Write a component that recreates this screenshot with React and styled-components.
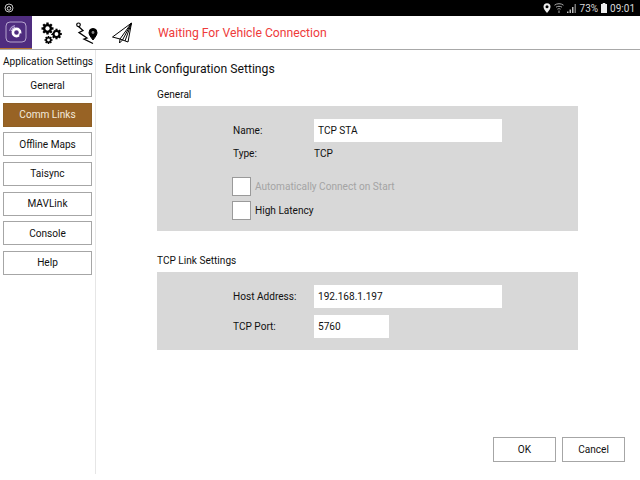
import React from 'react';
import styled, { createGlobalStyle } from 'styled-components';

const GlobalStyle = createGlobalStyle`
  html, body {
    margin: 0;
    padding: 0;
    background: #fff;
  }
  * {
    box-sizing: border-box;
  }
`;

const Page = styled.div`
  width: 640px;
  height: 480px;
  display: flex;
  flex-direction: column;
  overflow: hidden;
  font-family: Roboto, "Liberation Sans", sans-serif;
  color: #111;
`;

const StatusBar = styled.div`
  height: 16px;
  background: #000;
  color: #d8d8d8;
  display: flex;
  align-items: center;
  padding: 0 5px 0 4px;
  font-size: 10px;
  flex: none;
`;

const StatusRight = styled.div`
  margin-left: auto;
  display: flex;
  align-items: center;
  gap: 3px;
`;

const Toolbar = styled.div`
  height: 34px;
  flex: none;
  display: flex;
  align-items: stretch;
  border-bottom: 1px solid #a8a8a8;
`;

const LogoTile = styled.div`
  width: 32px;
  margin-right: 2px;
  background: #4f2d7f;
  border-bottom: 1px solid #b87333;
  display: flex;
  align-items: center;
  justify-content: center;
`;

const ToolIcon = styled.div`
  width: 35px;
  display: flex;
  align-items: center;
  justify-content: center;
`;

const ToolbarMessage = styled.div`
  margin-left: 19px;
  display: flex;
  align-items: center;
  color: #ee3b3b;
  font-size: 12.2px;
`;

const Body = styled.div`
  flex: 1;
  display: flex;
  min-height: 0;
`;

const Sidebar = styled.div`
  width: 96px;
  height: 424px;
  flex: none;
  border-right: 1px solid #e6e6e6;
  padding: 6px 3px 0;
  display: flex;
  flex-direction: column;
  gap: 5.67px;
`;

const SidebarTitle = styled.div`
  font-size: 10.1px;
  line-height: 12px;
  margin-bottom: -0.67px;
  white-space: nowrap;
`;

const SideButton = styled.div`
  height: 24px;
  flex: none;
  display: flex;
  align-items: center;
  justify-content: center;
  font-size: 10.1px;
  border: 1px solid ${props => (props.$active ? '#8f5f24' : '#a6a6a6')};
  background: ${props => (props.$active ? '#986325' : '#fff')};
  color: ${props => (props.$active ? '#f4eadc' : '#111')};
`;

const Main = styled.div`
  flex: 1;
  display: flex;
  flex-direction: column;
  padding: 12px 15px 18px 9px;
`;

const Title = styled.div`
  font-size: 12.2px;
  line-height: 15px;
`;

const Section = styled.div`
  margin: ${props => props.$top}px 47px 0 52px;
`;

const SectionTitle = styled.div`
  font-size: 10.1px;
  line-height: 12px;
  margin-bottom: 5px;
`;

const Panel = styled.div`
  background: #d8d8d8;
  height: ${props => props.$height}px;
  padding-top: ${props => props.$top}px;
  padding-left: 76px;
  display: flex;
  flex-direction: column;
`;

const FieldRow = styled.div`
  display: grid;
  grid-template-columns: 81px auto;
  justify-content: start;
  align-items: center;
  font-size: 10.1px;
  margin-bottom: ${props => props.$gap || 0}px;
`;

const TextInput = styled.div`
  width: ${props => props.$width}px;
  height: 23px;
  background: #fff;
  display: flex;
  align-items: center;
  padding-left: 4px;
  font-size: 10.1px;
`;

const CheckRow = styled.div`
  display: flex;
  align-items: center;
  gap: 4px;
  height: 19px;
  font-size: 10.1px;
  margin-left: -1px;
  margin-bottom: 5px;
  color: ${props => (props.$disabled ? '#a4a4a4' : '#111')};
`;

const CheckBox = styled.div`
  width: 19px;
  height: 19px;
  background: #fff;
  border: 1px solid #9a9a9a;
`;

const Footer = styled.div`
  margin-top: auto;
  display: flex;
  justify-content: flex-end;
  gap: 6px;
`;

const FooterButton = styled.div`
  width: 63px;
  height: 25px;
  border: 1px solid #a6a6a6;
  background: #fff;
  display: flex;
  align-items: center;
  justify-content: center;
  font-size: 10.1px;
`;

const LogoIcon = () => (
  <svg width="22" height="22" viewBox="0 0 22 22" fill="none">
    <rect x="1" y="1" width="20" height="20" rx="4" stroke="#cfc3e2" strokeWidth="0.8" />
    <circle cx="11.5" cy="11.5" r="3.6" stroke="#fff" strokeWidth="2.6" />
    <path d="M4.6 10 A7 7 0 0 1 10 4.6" stroke="#a996cc" strokeWidth="1.1" />
    <path d="M6.4 10 A5.2 5.2 0 0 1 10 6.4" stroke="#c9bce0" strokeWidth="1.1" />
    <path d="M17.5 14 L14 15.5 L15 12 Z" fill="#4f2d7f" />
  </svg>
);

const Gear = ({ x, y, r }) => {
  const teeth = [0, 45, 90, 135];
  return (
    <g transform={`translate(${x} ${y})`}>
      <circle r={r * 1.12} fill="#fff" />
      {teeth.map(a => (
        <rect key={a} x={-r * 0.2} y={-r} width={r * 0.4} height={r * 2} fill="#000" transform={`rotate(${a})`} />
      ))}
      <circle r={r * 0.76} fill="#000" />
      <circle r={r * 0.36} fill="#fff" />
    </g>
  );
};

const GearsIcon = () => (
  <svg width="24" height="24" viewBox="0 0 24 24">
    <Gear x={16.5} y={13} r={5.3} />
    <Gear x={8.5} y={19} r={4} />
    <Gear x={7.5} y={7.5} r={6} />
  </svg>
);

const RouteIcon = () => (
  <svg width="24" height="24" viewBox="0 0 24 24" fill="none" stroke="#000">
    <circle cx="3.5" cy="3.8" r="1.8" strokeWidth="1.2" />
    <path d="M3.8 5.8 L8 9.5 L4 11.5 L12 17 L9 18 L18 22.5" strokeWidth="1.3" />
    <path d="M18 19 C15 15 14 13.5 14 11.5 A4 4 0 0 1 22 11.5 C22 13.5 21 15 18 19 Z" fill="#000" />
    <circle cx="18" cy="11.5" r="1.4" fill="#888" stroke="none" />
  </svg>
);

const PlaneIcon = () => (
  <svg width="23" height="23" viewBox="0 0 23 23" fill="none" stroke="#000" strokeWidth="1" strokeLinejoin="round">
    <path d="M21.5 2 L2.5 16 L10 18 L18 21 Z" />
    <path d="M21.5 2 L10 18 L9.5 22 L12.5 19" />
    <path d="M21.5 2 L12.5 19" />
    <path d="M21.5 2 L15 20" />
  </svg>
);

const ArduLogo = () => (
  <svg width="10" height="10" viewBox="0 0 10 10" fill="none" stroke="#ddd">
    <circle cx="5" cy="5" r="4" strokeWidth="0.9" />
    <circle cx="5" cy="5.4" r="1.8" strokeWidth="1" />
  </svg>
);

const PinIcon = () => (
  <svg width="8" height="10" viewBox="0 0 8 10">
    <path d="M4 10 C1.5 7 0.5 5.5 0.5 3.7 A3.5 3.5 0 0 1 7.5 3.7 C7.5 5.5 6.5 7 4 10 Z" fill="#eee" />
    <circle cx="4" cy="3.7" r="1.5" fill="#000" />
  </svg>
);

const WifiIcon = () => (
  <svg width="10" height="10" viewBox="0 0 10 10" fill="none" stroke="#aaa" strokeWidth="1">
    <path d="M0.5 2.2 C3 0.2 7 0.2 9.5 2.2" />
    <path d="M2 4.2 C3.8 3 6.2 3 8 4.2" />
    <path d="M3.4 6.2 C4.4 5.5 5.6 5.5 6.6 6.2" />
    <path d="M5 7.5 V10" />
  </svg>
);

const SignalIcon = () => (
  <svg width="10" height="10" viewBox="0 0 10 10" fill="#bbb">
    <path d="M0 10 V8.5 H1.5 V10 Z M2.5 10 V6.5 H4 V10 Z M5 10 V4 H6.5 V10 Z" />
    <path d="M7.5 10 V1 H9 V10 Z" fill="#777" />
  </svg>
);

const BatteryIcon = () => (
  <svg width="6" height="10" viewBox="0 0 6 10" fill="#eee">
    <path d="M1.7 0 H4.3 V1 H6 V10 H0 V1 H1.7 Z" />
  </svg>
);

const menuItems = ['General', 'Comm Links', 'Offline Maps', 'Taisync', 'MAVLink', 'Console', 'Help'];

const App = () => (
  <Page>
    <GlobalStyle />
    <StatusBar>
      <ArduLogo />
      <StatusRight>
        <PinIcon />
        <WifiIcon />
        <SignalIcon />
        <span>73%</span>
        <BatteryIcon />
        <span>09:01</span>
      </StatusRight>
    </StatusBar>
    <Toolbar>
      <LogoTile><LogoIcon /></LogoTile>
      <ToolIcon><GearsIcon /></ToolIcon>
      <ToolIcon><RouteIcon /></ToolIcon>
      <ToolIcon><PlaneIcon /></ToolIcon>
      <ToolbarMessage>Waiting For Vehicle Connection</ToolbarMessage>
    </Toolbar>
    <Body>
      <Sidebar>
        <SidebarTitle>Application Settings</SidebarTitle>
        {menuItems.map(item => (
          <SideButton key={item} $active={item === 'Comm Links'}>{item}</SideButton>
        ))}
      </Sidebar>
      <Main>
        <Title>Edit Link Configuration Settings</Title>
        <Section $top={12}>
          <SectionTitle>General</SectionTitle>
          <Panel $height={125} $top={13}>
            <FieldRow $gap={6}>
              <span>Name:</span>
              <TextInput $width={188}>TCP STA</TextInput>
            </FieldRow>
            <FieldRow $gap={18}>
              <span>Type:</span>
              <span>TCP</span>
            </FieldRow>
            <CheckRow $disabled><CheckBox />Automatically Connect on Start</CheckRow>
            <CheckRow><CheckBox />High Latency</CheckRow>
          </Panel>
        </Section>
        <Section $top={24}>
          <SectionTitle>TCP Link Settings</SectionTitle>
          <Panel $height={78} $top={13}>
            <FieldRow $gap={7}>
              <span>Host Address:</span>
              <TextInput $width={188}>192.168.1.197</TextInput>
            </FieldRow>
            <FieldRow>
              <span>TCP Port:</span>
              <TextInput $width={75}>5760</TextInput>
            </FieldRow>
          </Panel>
        </Section>
        <Footer>
          <FooterButton>OK</FooterButton>
          <FooterButton>Cancel</FooterButton>
        </Footer>
      </Main>
    </Body>
  </Page>
);

export default App;
